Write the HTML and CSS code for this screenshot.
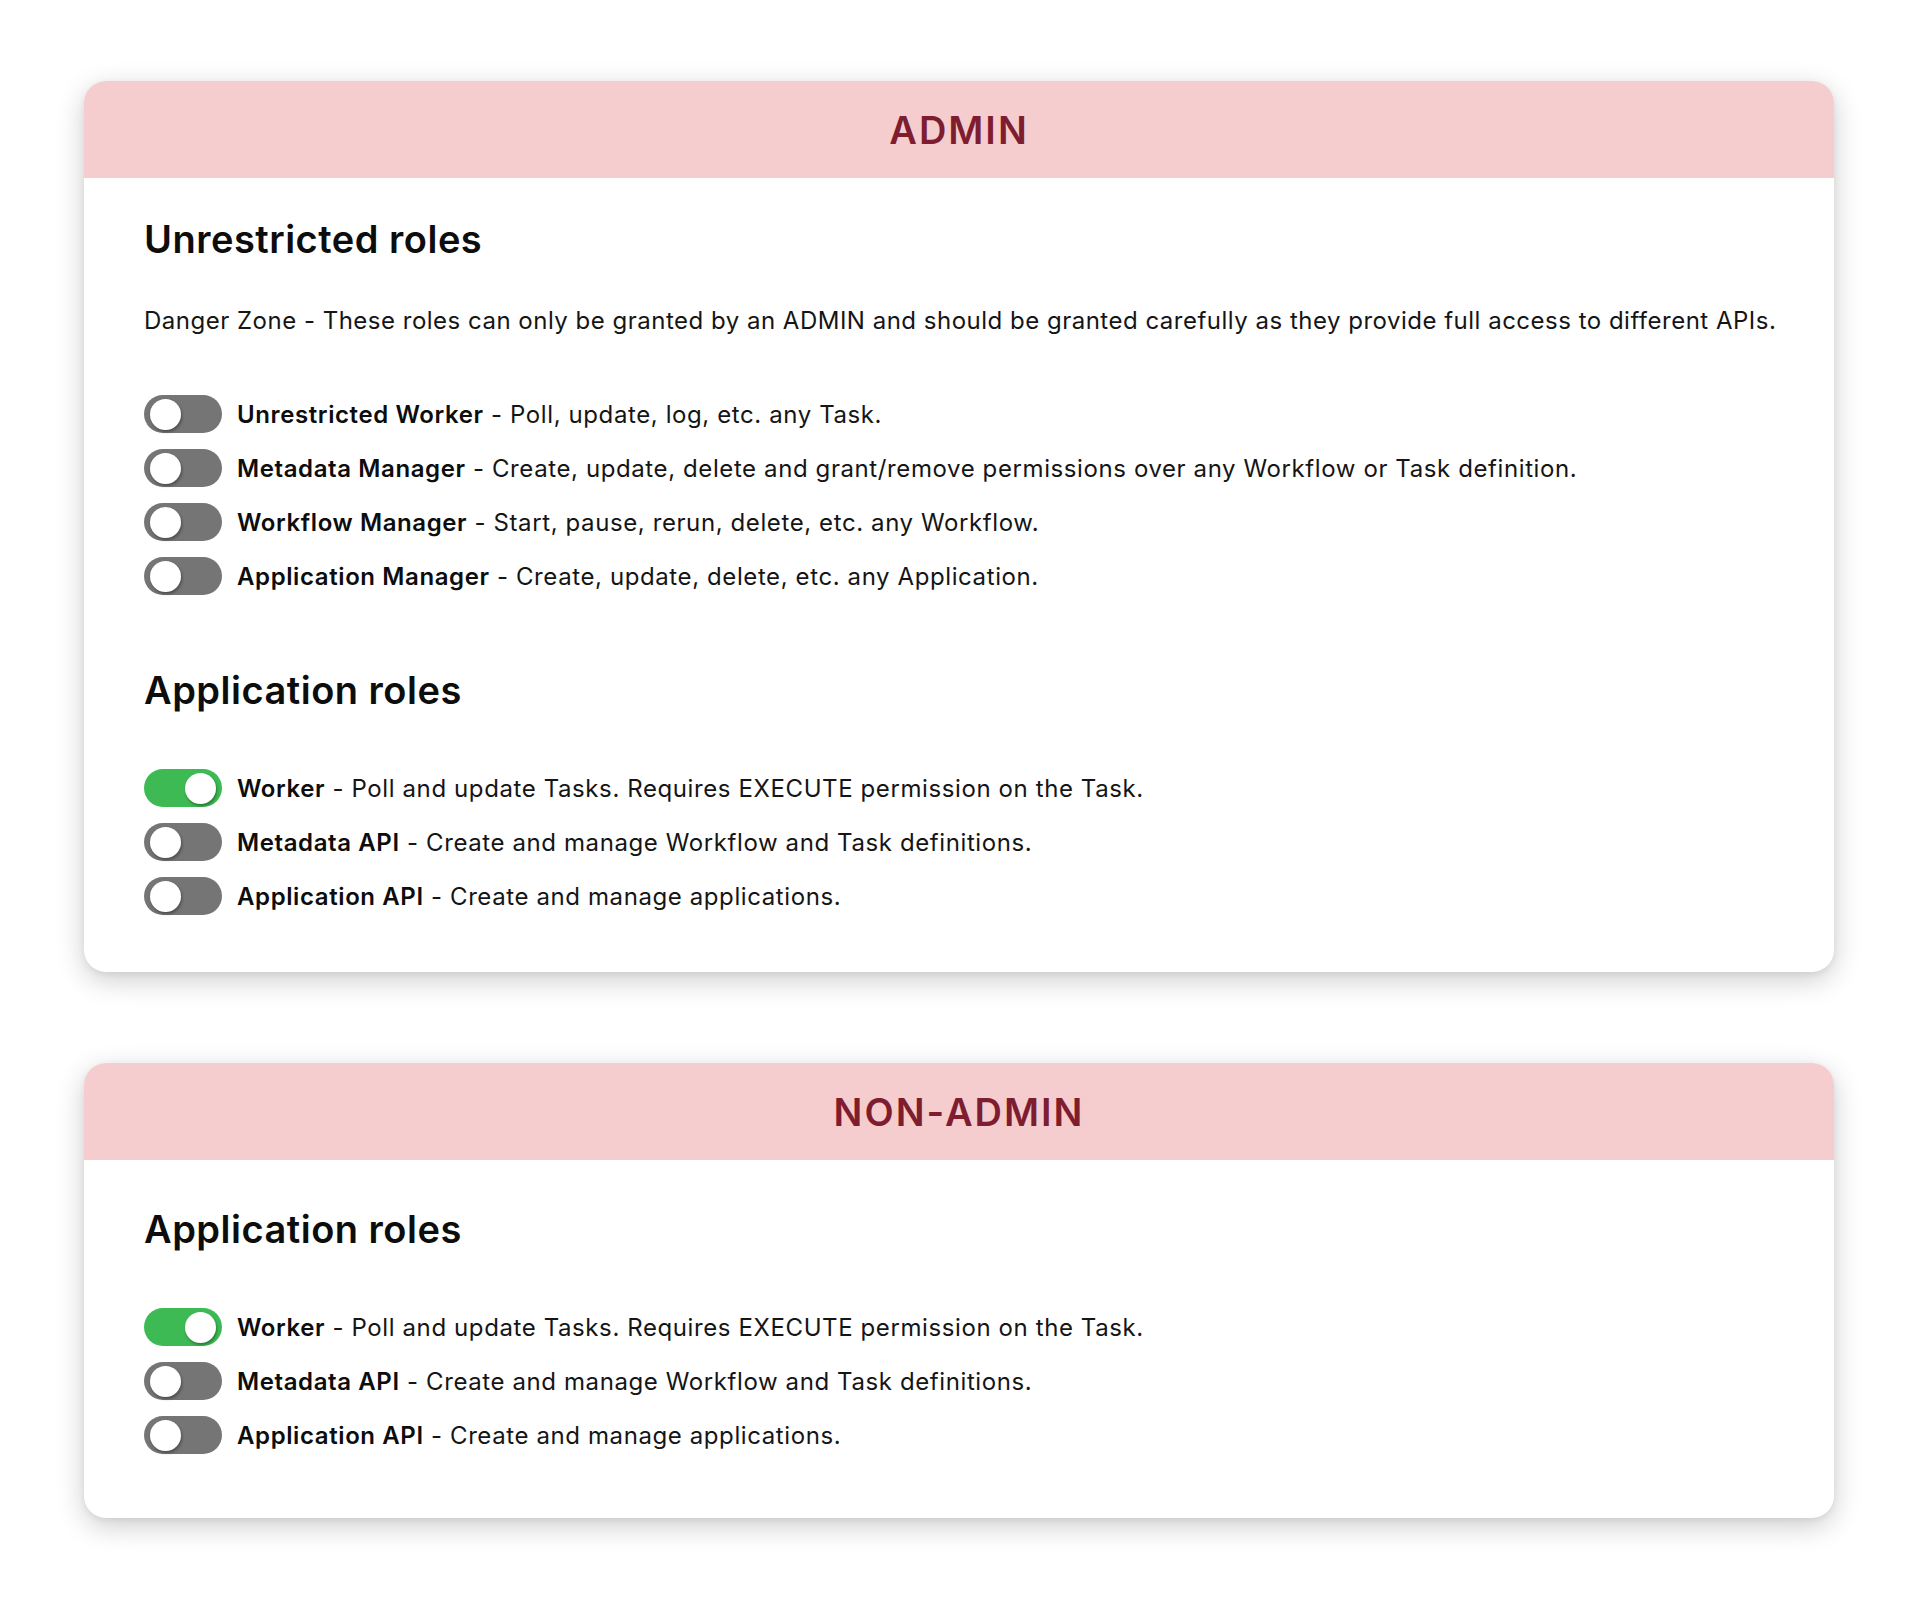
FILE: index.html
```html
<!DOCTYPE html>
<html lang="en">
<head>
<meta charset="utf-8">
<title>Roles</title>
<link rel="stylesheet" href="styles.css">
</head>
<body>
<main class="page">
  <section class="card">
    <header class="card-header">ADMIN</header>
    <div class="card-body">
      <h2 class="section-title">Unrestricted roles</h2>
      <p class="note">Danger Zone - These roles can only be granted by an ADMIN and should be granted carefully as they provide full access to different APIs.</p>
      <ul class="roles">
        <li class="role"><span class="switch"><span class="thumb"></span></span><span class="role-text"><b>Unrestricted Worker</b> - Poll, update, log, etc. any Task.</span></li>
        <li class="role"><span class="switch"><span class="thumb"></span></span><span class="role-text"><b>Metadata Manager</b> - Create, update, delete and grant/remove permissions over any Workflow or Task definition.</span></li>
        <li class="role"><span class="switch"><span class="thumb"></span></span><span class="role-text"><b>Workflow Manager</b> - Start, pause, rerun, delete, etc. any Workflow.</span></li>
        <li class="role"><span class="switch"><span class="thumb"></span></span><span class="role-text"><b>Application Manager</b> - Create, update, delete, etc. any Application.</span></li>
      </ul>
      <h2 class="section-title section-title--spaced">Application roles</h2>
      <ul class="roles roles--tight">
        <li class="role"><span class="switch switch--on"><span class="thumb"></span></span><span class="role-text"><b>Worker</b> - Poll and update Tasks. Requires EXECUTE permission on the Task.</span></li>
        <li class="role"><span class="switch"><span class="thumb"></span></span><span class="role-text"><b>Metadata API</b> - Create and manage Workflow and Task definitions.</span></li>
        <li class="role"><span class="switch"><span class="thumb"></span></span><span class="role-text"><b>Application API</b> - Create and manage applications.</span></li>
      </ul>
    </div>
  </section>

  <section class="card">
    <header class="card-header">NON-ADMIN</header>
    <div class="card-body card-body--roomy">
      <h2 class="section-title">Application roles</h2>
      <ul class="roles roles--tight">
        <li class="role"><span class="switch switch--on"><span class="thumb"></span></span><span class="role-text"><b>Worker</b> - Poll and update Tasks. Requires EXECUTE permission on the Task.</span></li>
        <li class="role"><span class="switch"><span class="thumb"></span></span><span class="role-text"><b>Metadata API</b> - Create and manage Workflow and Task definitions.</span></li>
        <li class="role"><span class="switch"><span class="thumb"></span></span><span class="role-text"><b>Application API</b> - Create and manage applications.</span></li>
      </ul>
    </div>
  </section>
</main>
</body>
</html>
```
FILE: styles.css
```css
* { box-sizing: border-box; }

html, body {
  margin: 0;
  padding: 0;
  background: #ffffff;
}

body {
  font-family: Inter, "Noto Sans", "Liberation Sans", sans-serif;
  color: #111111;
}

.page {
  display: flex;
  flex-direction: column;
  gap: 91px;
  padding: 81px 86px 60px 84px;
}

.card {
  background: #ffffff;
  border-radius: 22px;
  overflow: hidden;
  box-shadow: 0 8px 28px rgba(0, 0, 0, 0.20), 0 2px 6px rgba(0, 0, 0, 0.06);
}

.card-header {
  height: 97px;
  background: #f6cdcf;
  color: #7f1d30;
  display: flex;
  align-items: center;
  justify-content: center;
  font-size: 38px;
  font-weight: 600;
  letter-spacing: 2px;
}

.card-body {
  padding: 38px 60px 49px 60px;
}

.card-body--roomy {
  padding-top: 46px;
  padding-bottom: 56px;
}

.section-title {
  margin: 0;
  font-size: 38px;
  line-height: 46px;
  font-weight: 600;
  letter-spacing: 0.5px;
  color: #0d0d0d;
}

.section-title--spaced {
  margin-top: 64px;
}

.note {
  margin: 43px 0 0 0;
  font-size: 24px;
  line-height: 32px;
  letter-spacing: 0.5px;
  white-space: nowrap;
  color: #151515;
}

.roles {
  list-style: none;
  margin: 50px 0 0 0;
  padding: 0;
  display: flex;
  flex-direction: column;
}

.roles--tight {
  margin-top: 48px;
}

.role {
  display: flex;
  align-items: center;
  gap: 15px;
  height: 54px;
  font-size: 24px;
  letter-spacing: 0.6px;
  color: #151515;
}

.role-text b {
  font-weight: 600;
  color: #0d0d0d;
}

.switch {
  flex: none;
  width: 78px;
  height: 38px;
  border-radius: 19px;
  background: #757575;
  display: flex;
  align-items: center;
  padding: 0 6px;
}

.switch--on {
  background: #3dba53;
  justify-content: flex-end;
}

.thumb {
  width: 31px;
  height: 31px;
  border-radius: 50%;
  background: #ffffff;
  box-shadow: 1px 2px 3px rgba(0, 0, 0, 0.35);
}
```
